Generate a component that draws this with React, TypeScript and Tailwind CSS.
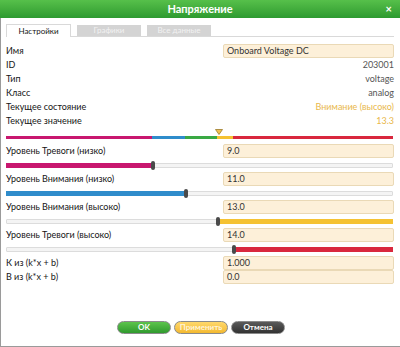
import React from 'react';

const info = [
  { label: 'ID', value: '203001', tone: 'text-[#555]' },
  { label: 'Тип', value: 'voltage', tone: 'text-[#555]' },
  { label: 'Класс', value: 'analog', tone: 'text-[#555]' },
  { label: 'Текущее состояние', value: 'Внимание (высоко)', tone: 'text-[#e9b84a]' },
  { label: 'Текущее значение', value: '13.3', tone: 'text-[#e9b84a]' },
];

const levels = [
  { label: 'Уровень Тревоги (низко)', value: '9.0', pos: 146, side: 'left', fill: 'bg-[#c8176f]' },
  { label: 'Уровень Внимания (низко)', value: '11.0', pos: 179, side: 'left', fill: 'bg-[#2f8ccb]' },
  { label: 'Уровень Внимания (высоко)', value: '13.0', pos: 211, side: 'right', fill: 'bg-[#f5c232]' },
  { label: 'Уровень Тревоги (высоко)', value: '14.0', pos: 227, side: 'right', fill: 'bg-[#d9283e]' },
];

function Field({ value }: { value: string }) {
  return (
    <div className="w-[171px] h-[14px] bg-[#fdf0d9] border border-[#ead9b6] rounded-[2px] px-[3px] text-[9px] leading-[12px] text-[#333]">
      {value}
    </div>
  );
}

function Slider({ pos, side, fill }: { pos: number; side: string; fill: string }) {
  return (
    <div className="h-[14px] flex items-center">
      <div className="relative w-[387px] h-[5px] bg-[#f4f4f4] border border-[#dcdcdc] rounded-[1px]">
        {side === 'left' ? (
          <div className={`absolute -top-px -left-px h-[5px] ${fill}`} style={{ width: pos }} />
        ) : (
          <div className={`absolute -top-px -right-px h-[5px] ${fill}`} style={{ left: pos }} />
        )}
        <div
          className="absolute -top-[3px] w-[4px] h-[9px] rounded-[2px] bg-[#4a4a4a]"
          style={{ left: pos - 2 }}
        />
      </div>
    </div>
  );
}

export default function App() {
  return (
    <div className="w-[400px] h-[347px] bg-white flex flex-col font-['Lato',sans-serif] text-[9px] text-[#151515] border-l border-b border-[#9a9a9a]">
      <div className="h-[18px] shrink-0 bg-gradient-to-b from-[#56c04a] to-[#2d9a30] flex items-center relative -ml-px">
        <div className="flex-1 text-center text-white font-bold text-[11px]">Напряжение</div>
        <div className="absolute right-[8px] top-[1px] text-white font-bold text-[11px]">×</div>
      </div>

      <div className="px-[5px] pt-[6px] flex flex-col">
        <div className="flex items-end gap-[6px] border-b border-[#d9d9d9] h-[13px] w-[388px]">
          <div className="w-[65px] h-[13px] bg-white border border-b-0 border-[#d9d9d9] text-center text-[8px] leading-[12px] -mb-px">Настройки</div>
          <div className="w-[64px] h-[11px] bg-[#d4d4d4] text-center text-[8px] leading-[11px] text-[#f2f2f2]">Графики</div>
          <div className="w-[64px] h-[11px] bg-[#d4d4d4] text-center text-[8px] leading-[11px] text-[#f2f2f2]">Все данные</div>
        </div>

        <div className="mt-[7px] flex flex-col w-[388px]">
          <div className="h-[14px] flex items-center justify-between">
            <span>Имя</span>
            <Field value="Onboard Voltage DC" />
          </div>
          {info.map((r) => (
            <div key={r.label} className="h-[14px] flex items-center justify-between">
              <span>{r.label}</span>
              <span className={r.tone}>{r.value}</span>
            </div>
          ))}

          <div className="h-[16px] relative flex items-end pb-[5px]">
            <svg className="absolute left-[209px] top-[1px]" width="8" height="6" viewBox="0 0 8 6">
              <path d="M0.5 0.5 H7.5 L4 5.5 Z" fill="#f2c14e" stroke="#9a7a2a" strokeWidth="0.8" />
            </svg>
            <div className="flex w-[387px] h-[3px]">
              <div className="w-[146px] bg-[#c8176f]" />
              <div className="w-[33px] bg-[#2f8ccb]" />
              <div className="w-[32px] bg-[#3aa944]" />
              <div className="w-[16px] bg-[#f5c232]" />
              <div className="flex-1 bg-[#d9283e]" />
            </div>
          </div>

          {levels.map((l) => (
            <div key={l.label} className="flex flex-col">
              <div className="h-[14px] flex items-center justify-between">
                <span>{l.label}</span>
                <Field value={l.value} />
              </div>
              <Slider pos={l.pos} side={l.side} fill={l.fill} />
            </div>
          ))}

          <div className="h-[14px] flex items-center justify-between">
            <span>К из (k*x + b)</span>
            <Field value="1.000" />
          </div>
          <div className="h-[14px] flex items-center justify-between">
            <span>В из (k*x + b)</span>
            <Field value="0.0" />
          </div>
        </div>
      </div>

      <div className="flex-1" />
      <div className="flex justify-center gap-[3px] pb-[12px] pl-[1px]">
        <button className="w-[54px] h-[13px] rounded-full border border-[#8a8a8a] bg-gradient-to-b from-[#5cc44c] to-[#2f9a2e] text-white font-bold text-[8px] leading-[11px]">OK</button>
        <button className="w-[54px] h-[13px] rounded-full border border-[#8a8a8a] bg-gradient-to-b from-[#ffd86a] to-[#f3b92e] text-[#fff4d8] font-bold text-[8px] leading-[11px]">Применить</button>
        <button className="w-[54px] h-[13px] rounded-full border border-[#8a8a8a] bg-gradient-to-b from-[#5a5a5a] to-[#333] text-white font-bold text-[8px] leading-[11px]">Отмена</button>
      </div>
    </div>
  );
}
